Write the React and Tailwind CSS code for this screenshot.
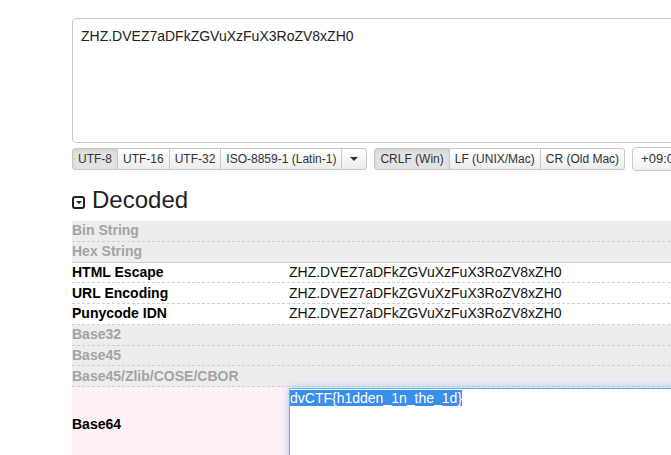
const V = "ZHZ.DVEZ7aDFkZGVuXzFuX3RoZV8xZH0";

const rows = [
  { label: "Bin String", dim: true },
  { label: "Hex String", dim: true, solid: true },
  { label: "HTML Escape", value: V },
  { label: "URL Encoding", value: V },
  { label: "Punycode IDN", value: V },
  { label: "Base32", dim: true },
  { label: "Base45", dim: true },
  { label: "Base45/Zlib/COSE/CBOR", dim: true },
];

function Btn({ children, active, first, last }) {
  return (
    <div
      className={
        "h-[22px] flex items-center px-[5px] border-y border-r border-[#c8c8c8] text-[12px] text-[#333] whitespace-nowrap " +
        (first ? "border-l rounded-l-[3px] " : "") +
        (last ? "rounded-r-[3px] " : "") +
        (active
          ? "bg-[#e3e3e3] shadow-[inset_0_2px_4px_rgba(0,0,0,0.08)]"
          : "bg-linear-to-b from-white to-[#ececec]")
      }
    >
      {children}
    </div>
  );
}

export default function App() {
  return (
    <div className="w-[671px] h-[455px] overflow-hidden bg-white font-['Liberation_Sans',Arial,sans-serif] text-[#333]">
      <div className="w-[760px] pl-[72px] pt-[18px]">
        <div className="h-[125px] border border-[#c8c8c8] rounded-[4px] bg-white px-[8px] pt-[7px] text-[14px] leading-[20px] text-[#222]">
          {V}
        </div>

        <div className="mt-[4px] flex items-center">
          <div className="flex">
            <Btn active first>UTF-8</Btn>
            <Btn>UTF-16</Btn>
            <Btn>UTF-32</Btn>
            <Btn>ISO-8859-1 (Latin-1)</Btn>
            <Btn last>
              <span className="w-[14px] flex justify-center">
                <span className="block w-0 h-0 border-l-[4px] border-r-[4px] border-t-[4px] border-l-transparent border-r-transparent border-t-[#333]" />
              </span>
            </Btn>
          </div>
          <div className="flex ml-[7px]">
            <Btn active first>CRLF (Win)</Btn>
            <Btn>LF (UNIX/Mac)</Btn>
            <Btn last>CR (Old Mac)</Btn>
          </div>
          <div className="ml-[7px] h-[24px] flex items-center pl-[8px] pr-[6px] border border-[#c8c8c8] rounded-[4px] bg-linear-to-b from-white to-[#f2f2f2] text-[13px] text-[#333] whitespace-nowrap">
            +09:00 (Asia/Tokyo)
          </div>
        </div>

        <div className="mt-[16px] h-[26px] flex items-start">
          <div className="mt-[9px] w-[13px] h-[13px] rounded-[3px] border-[2px] border-[#222] flex items-center justify-center">
            <span className="block w-0 h-0 border-l-[3px] border-r-[3px] border-t-[3px] border-l-transparent border-r-transparent border-t-[#222]" />
          </div>
          <div className="ml-[7px] text-[24px] leading-[26px] text-[#222]">Decoded</div>
        </div>

        <div className="mt-[8px]">
          {rows.map((r) => (
            <div
              key={r.label}
              className={
                "h-[20.75px] flex items-center border-b border-[#cfcfcf] text-[14px] " +
                (r.solid ? "border-solid " : "border-dashed ") +
                (r.dim ? "bg-[#ededed]" : "bg-white")
              }
            >
              <div
                className={
                  "w-[217px] font-bold " + (r.dim ? "text-[#a3a3a3]" : "text-black")
                }
              >
                {r.label}
              </div>
              <div className="text-[#111]">{r.value || ""}</div>
            </div>
          ))}
          <div className="flex h-[80px]">
            <div className="w-[217px] bg-[#fff0f5] flex items-center pb-[6px] text-[14px] font-bold text-black">
              Base64
            </div>
            <div className="flex-1 pt-[1px] bg-white">
              <div className="h-[72px] border border-[#66afe9] bg-white shadow-[0_0_8px_rgba(102,175,233,0.6)] text-[14px] leading-[19px]">
                <span className="bg-[#3b8eea] text-white">dvCTF{"{"}h1dden_1n_the_1d{"}"}</span>
              </div>
            </div>
          </div>
        </div>
      </div>
    </div>
  );
}
